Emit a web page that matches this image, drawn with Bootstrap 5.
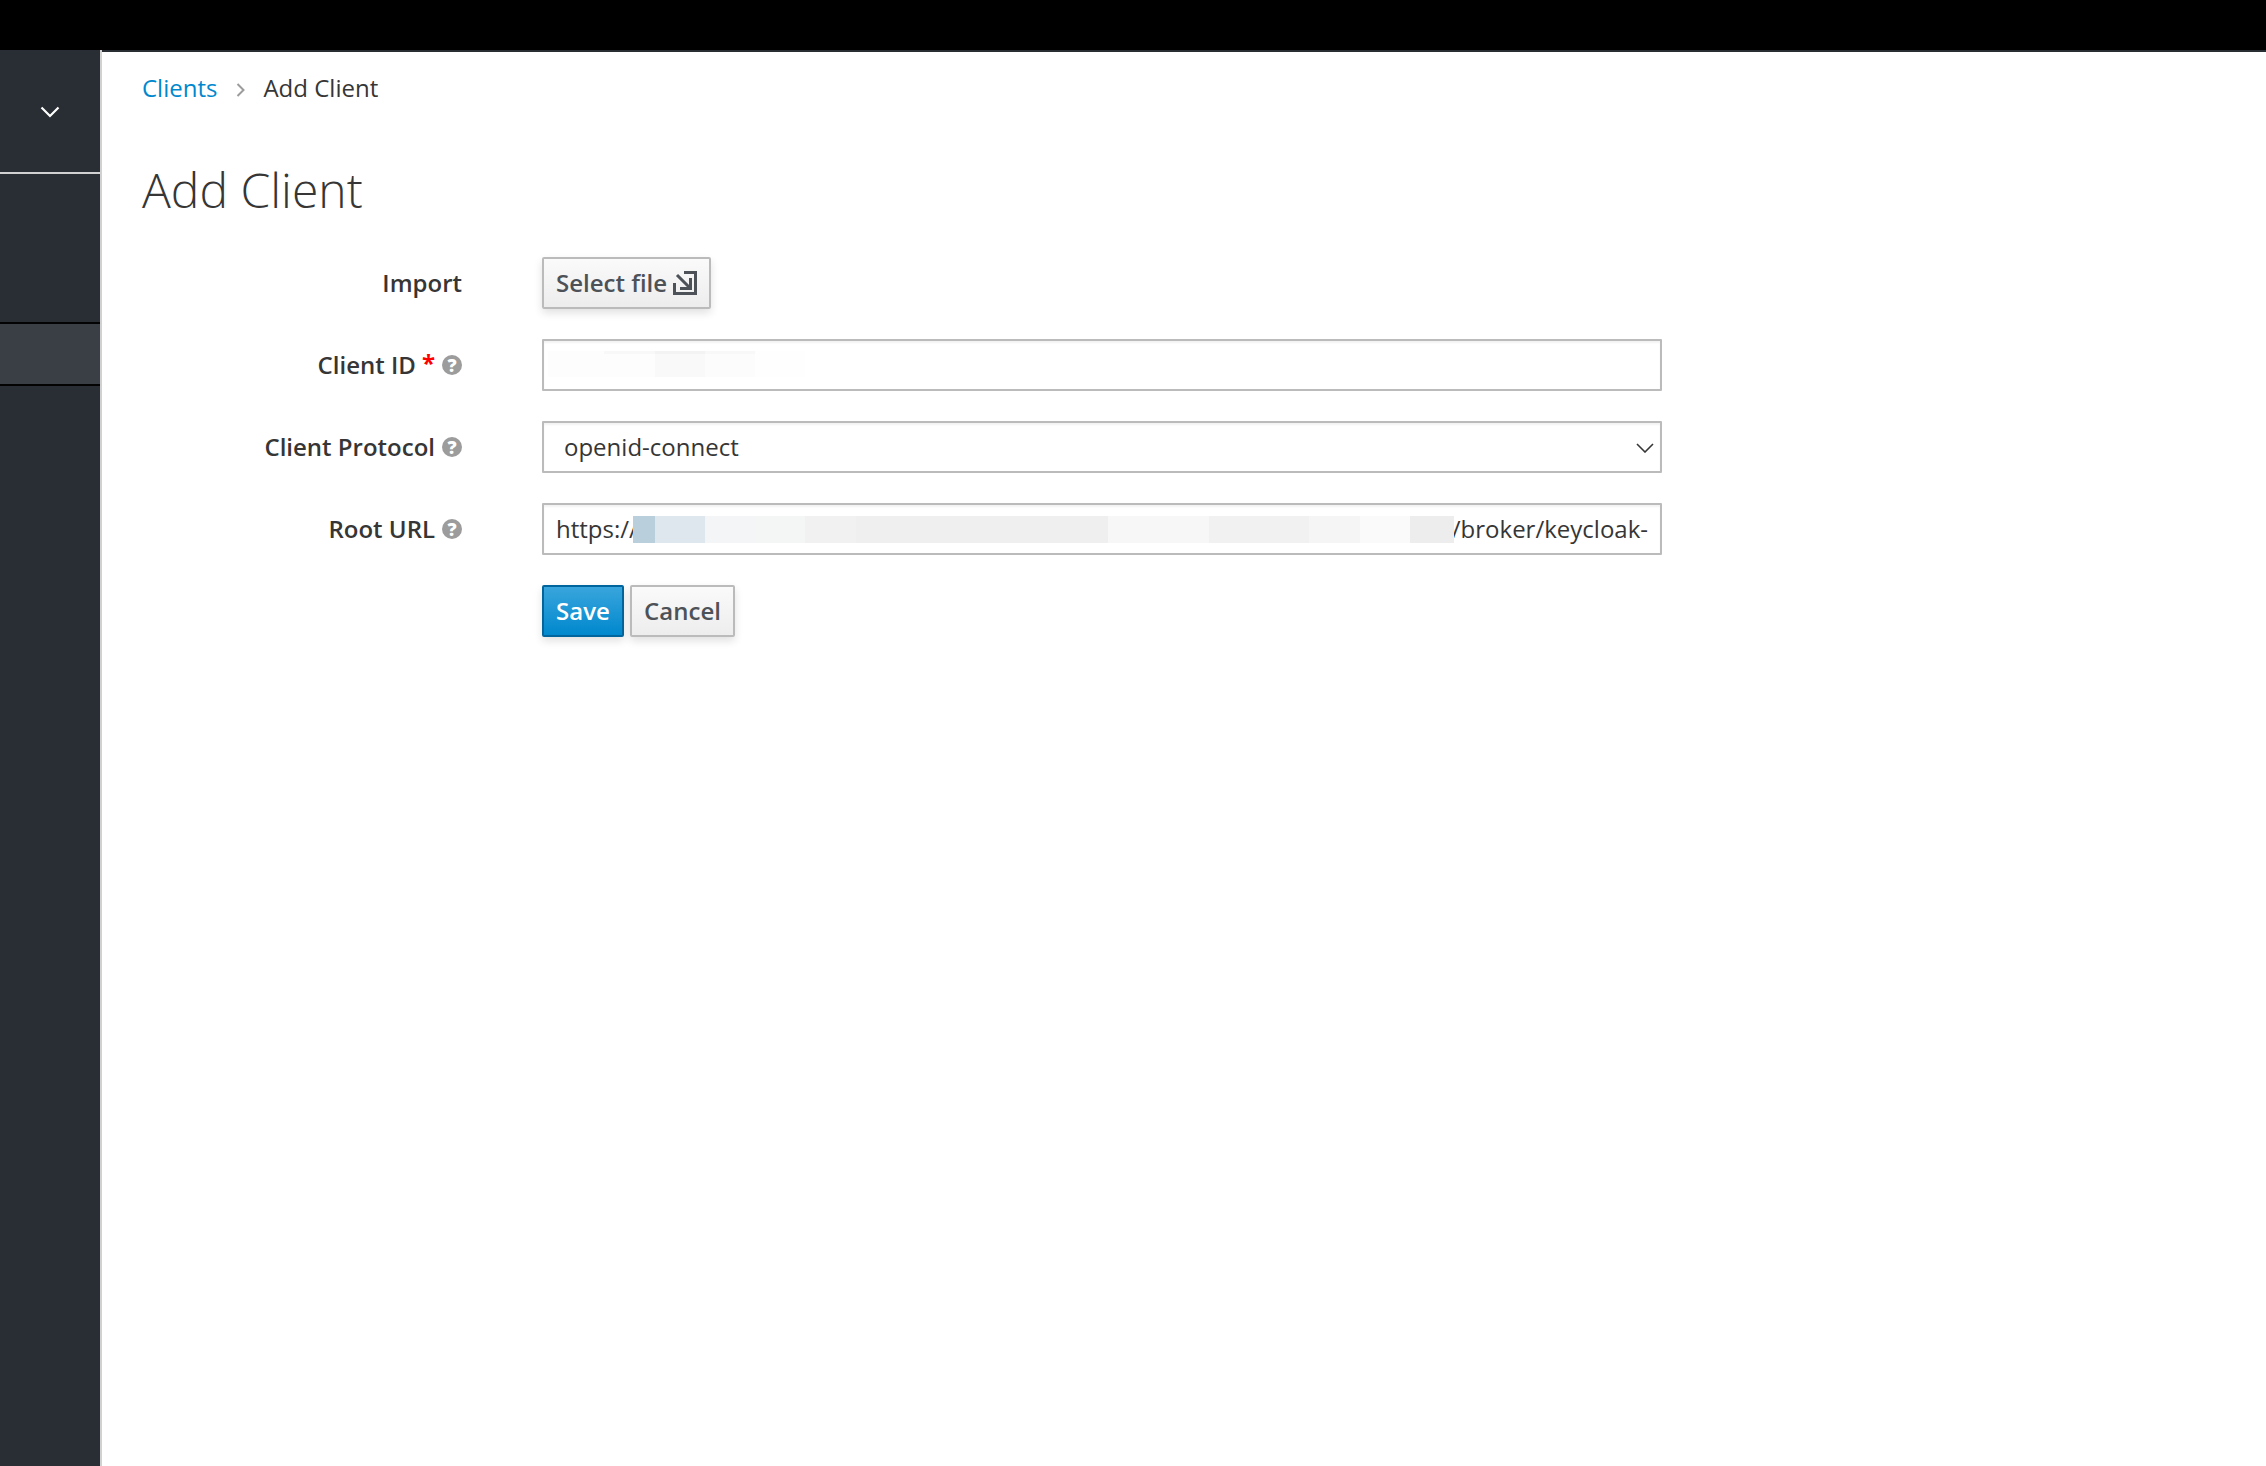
<!DOCTYPE html>
<html lang="en">
<head>
<meta charset="utf-8">
<title>Add Client</title>
<link href="https://cdn.jsdelivr.net/npm/bootstrap@5.3.0/dist/css/bootstrap.min.css" rel="stylesheet">
<style>
html,body{height:100%}
body{font-family:"Open Sans",sans-serif;font-size:24px;color:#363636;background:#fff;overflow:hidden}
.topbar{background:#000;border-bottom:2px solid #292e34;box-sizing:content-box;height:50px;margin-bottom:-2px}
.shell{height:calc(100vh - 50px)}
.sidenav{width:102px;background:#292e34;border-right:2px solid #d1d1d1;flex:none}
.navtoggle{height:124px;border-bottom:2px solid #d1d1d1;padding-top:2px}
.navspacer{height:150px;border-bottom:2px solid #030303;box-sizing:border-box}
.navactive{height:62px;background:#393f44;border-bottom:2px solid #030303;box-sizing:border-box}
.mainpane{padding-left:40px;padding-top:13px}
.crumbs{margin:0;height:50px;align-items:center;line-height:36px}
.crumbs a{color:#0088ce;text-decoration:none}
.crumbs .sep{margin:4px 18px 0 19px;width:9px}
.pagetitle{font-size:48px;font-weight:300;line-height:56px;margin:49px 0 0;color:#363636}
.formgrid{margin-top:39px;display:flex;flex-direction:column;gap:30px;width:1520px}
.frow{height:52px;gap:80px}
.flabel{width:320px;flex:none;margin:0;font-weight:600;justify-content:flex-end;gap:7px;color:#363636;line-height:1}
.req{color:#f00;font-weight:700;margin-left:-1px;position:relative;top:-2px}
.qmark{width:20px;height:20px;border-radius:50%;background:#9c9c9c;color:#fff;font-size:18px;font-weight:800;line-height:20px;text-align:center;flex:none}
.ctrl{width:1120px;flex:none;position:relative}
.kcbtn{height:52px;border:2px solid #bbb;border-radius:2px;background:linear-gradient(#fafafa,#ededed);color:#4d5258;font-size:24px;font-weight:600;padding:0 12px;line-height:1;box-shadow:0 4px 8px rgba(3,3,3,.12);gap:6px}
.kcbtn:hover{color:#4d5258;border-color:#bbb}
.kcsave{background:linear-gradient(#39a5dc,#0088ce);border-color:#00659c;color:#fff;width:82px;justify-content:center}
.kcsave:hover{color:#fff;border-color:#00659c}
.kccancel{width:105px;justify-content:center;margin-left:6px}
.kcfield{height:52px;border:2px solid #bbb;border-radius:1px;font-size:24px;color:#363636;padding:0 12px;box-shadow:inset 0 2px 2px rgba(3,3,3,.05);line-height:1.4}
.kcselect{padding-left:20px;background-image:none}
.selchev{position:absolute;right:8px;top:22px;width:18px;height:10px;pointer-events:none}
.blurrow{position:absolute;display:flex;pointer-events:none}
.blurid{left:6px;top:12px;height:26px}
.blururl{left:91px;top:13px;height:27px}
.blurrow span{display:block;height:100%}
.blurid span{box-sizing:border-box;border-top:3px solid}
</style>
</head>
<body>
<div class="topbar"></div>
<div class="shell d-flex">
  <nav class="sidenav d-flex flex-column">
    <div class="navtoggle d-flex align-items-center justify-content-center">
      <svg width="20" height="12" viewBox="0 0 20 12" aria-hidden="true"><path d="M1.5 1.5 10 10l8.5-8.5" fill="none" stroke="#fff" stroke-width="2.2"/></svg>
    </div>
    <div class="navspacer"></div>
    <div class="navactive"></div>
  </nav>
  <main class="mainpane flex-grow-1">
    <div class="crumbs d-flex">
      <a href="#">Clients</a>
      <svg class="sep" height="14" viewBox="0 0 9 14" aria-hidden="true"><path d="M1.5 1 7.5 7l-6 6" fill="none" stroke="#9c9c9c" stroke-width="2"/></svg>
      <span>Add Client</span>
    </div>
    <h1 class="pagetitle">Add Client</h1>
    <form class="formgrid">
      <div class="frow d-flex align-items-center">
        <label class="flabel d-flex align-items-center">Import</label>
        <div class="ctrl">
          <button type="button" class="btn kcbtn d-inline-flex align-items-center">Select file
            <svg width="24" height="24" viewBox="0 0 24 24" aria-hidden="true"><path d="M11 1.5H22.5V22.5H1.5V12M4 4 16 16M17.5 7V17.5H7" fill="none" stroke="#4d5258" stroke-width="3"/></svg>
          </button>
        </div>
      </div>
      <div class="frow d-flex align-items-center">
        <label class="flabel d-flex align-items-center" for="cid">Client ID <span class="req">*</span><span class="qmark">?</span></label>
        <div class="ctrl">
          <input id="cid" class="form-control kcfield" type="text">
          <div class="blurrow blurid">
            <span style="width:56px;background:#fdfdfd;border-color:#fdfdfd"></span><span style="width:51px;background:#fcfdfc;border-color:#f8f8f8"></span><span style="width:50px;background:#f9f9f9;border-color:#f3f3f3"></span><span style="width:50px;background:#fcfcfc;border-color:#f8f8f8"></span><span style="width:50px;background:#fefefe;border-color:#fefefe"></span>
          </div>
        </div>
      </div>
      <div class="frow d-flex align-items-center">
        <label class="flabel d-flex align-items-center" for="proto">Client Protocol <span class="qmark">?</span></label>
        <div class="ctrl">
          <select id="proto" class="form-select kcfield kcselect"><option>openid-connect</option></select>
          <svg class="selchev" viewBox="0 0 18 10" aria-hidden="true"><path d="M1 1 9 9l8-8" fill="none" stroke="#363636" stroke-width="1.6"/></svg>
        </div>
      </div>
      <div class="frow d-flex align-items-center">
        <div class="flabel d-flex align-items-center">Root URL <span class="qmark">?</span></div>
        <div class="ctrl">
          <div class="form-control kcfield d-flex align-items-center justify-content-between"><span>https://</span><span>/broker/keycloak-</span></div>
          <div class="blurrow blururl">
            <span style="width:22px;background:#b9cfdc"></span><span style="width:50px;background:#dee6ee"></span><span style="width:50px;background:#f3f5f7"></span><span style="width:50px;background:#f4f6f6"></span><span style="width:51px;background:#f1f1f1"></span><span style="width:252px;background:#efefef"></span><span style="width:101px;background:#f7f7f7"></span><span style="width:100px;background:#f1f1f1"></span><span style="width:51px;background:#f5f5f5"></span><span style="width:50px;background:#fafafa"></span><span style="width:44px;background:#ededed"></span>
          </div>
        </div>
      </div>
      <div class="frow d-flex align-items-center">
        <div class="flabel"></div>
        <div class="ctrl d-flex">
          <button type="button" class="btn kcbtn kcsave d-inline-flex align-items-center">Save</button>
          <button type="button" class="btn kcbtn kccancel d-inline-flex align-items-center">Cancel</button>
        </div>
      </div>
    </form>
  </main>
</div>
<script src="https://cdn.jsdelivr.net/npm/bootstrap@5.3.0/dist/js/bootstrap.bundle.min.js"></script>
</body>
</html>
